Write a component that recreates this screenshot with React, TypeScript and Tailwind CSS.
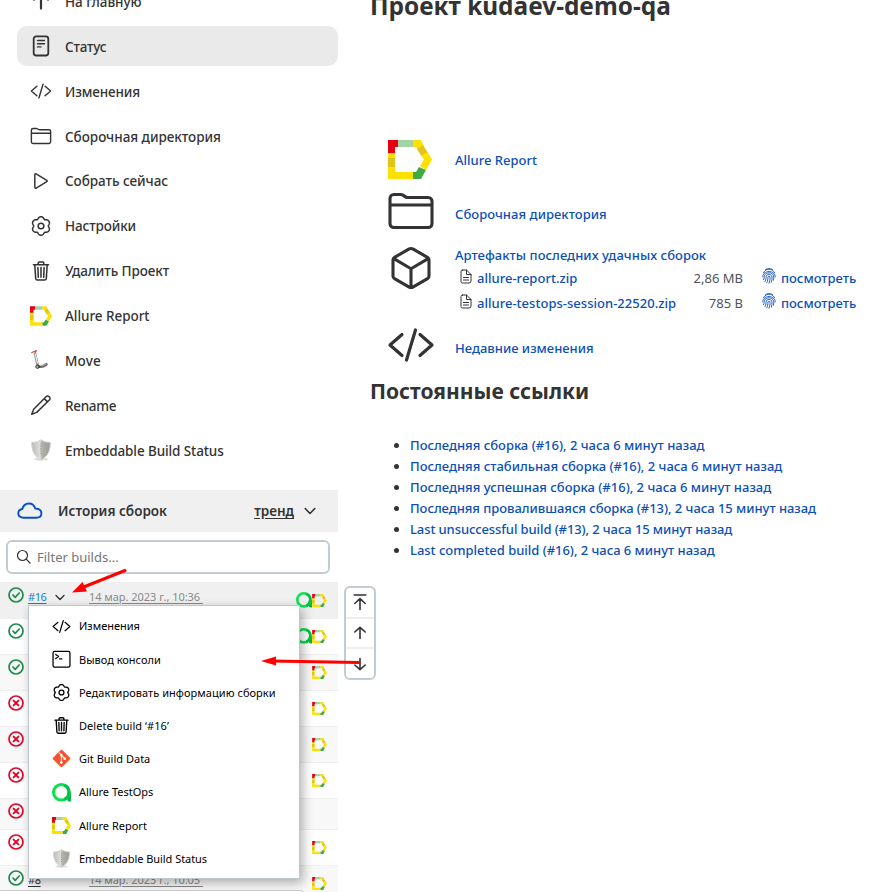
import type { ReactNode } from "react";

type P = { className?: string };
const line = { fill: "none", stroke: "currentColor", strokeLinecap: "round", strokeLinejoin: "round" } as const;

const Doc = ({ className }: P) => (
  <svg viewBox="0 0 22 22" className={className} {...line} strokeWidth="1.800"><rect x="3.700" y="1.300" width="14.600" height="19.200" rx="2.500" /><path d="M7.500 5.500h7M7.500 8.700h7M7.500 11.900h3.500" strokeWidth="1.400" /></svg>
);
const Code = ({ className }: P) => (
  <svg viewBox="0 0 512 512" className={className} {...line} strokeWidth="34"><path d="M160 368L32 256l128-112M352 368l128-112-128-112M304 96l-96 320" /></svg>
);
const Folder = ({ className }: P) => (
  <svg viewBox="0 0 512 512" className={className} {...line} strokeWidth="33"><path d="M440 432H72a40 40 0 01-40-40V120a40 40 0 0140-40h75.900a40 40 0 0122.200 6.700l27.800 18.600a40 40 0 0022.200 6.700H440a40 40 0 0140 40v240a40 40 0 01-40 40zM32 192h448" /></svg>
);
const Play = ({ className }: P) => (
  <svg viewBox="0 0 512 512" className={className} {...line} strokeWidth="34"><path d="M112 111v290c0 17.440 17 28.520 31 20.160l247.900-148.370c12.120-7.250 12.120-26.330 0-33.580L143 90.840c-14-8.360-31 2.720-31 20.160z" /></svg>
);
const gearOutline =
  "M" +
  Array.from({ length: 120 }, (_, i) => {
    const a = (i * Math.PI) / 60;
    const r = 196 + 22 * Math.cos(6 * a) - 4 * Math.cos(12 * a);
    return `${(256 + r * Math.sin(a)).toFixed(1)} ${(256 - r * Math.cos(a)).toFixed(1)}`;
  }).join("L") +
  "Z";
const Gear = ({ className }: P) => (
  <svg viewBox="0 0 512 512" className={className} {...line} strokeWidth="35"><circle cx="256" cy="256" r="66" /><path d={gearOutline} /></svg>
);
const Trash = ({ className }: P) => (
  <svg viewBox="0 0 512 512" className={className} {...line} strokeWidth="36"><path d="M112 112l20 320c.950 18.490 14.400 32 32 32h184c17.670 0 30.870-13.510 32-32l20-320M80 112h352M192 112V72a23.930 23.930 0 0124-24h80a23.930 23.930 0 0124 24v40M256 176v224M184 176l8 224M328 176l-8 224" /></svg>
);
const Pencil = ({ className }: P) => (
  <svg viewBox="0 0 22 22" className={className} {...line} strokeWidth="1.500"><path d="M16.300 2.500c1.700-1.700 5 1.500 3.300 3.200L6.700 18.400 1.700 20.300l2-5zM14.200 4.600l3.300 3.300" /></svg>
);
const Terminal = ({ className }: P) => (
  <svg viewBox="0 0 512 512" className={className} {...line} strokeWidth="34"><rect x="28" y="40" width="456" height="420" rx="44" /><path d="M100 120l78 56-78 56M204 240h60" /></svg>
);
const Cube = ({ className }: P) => (
  <svg viewBox="0 0 512 512" className={className} {...line} strokeWidth="33"><path d="M448 341.370V170.610A32 32 0 00432.110 143l-152-88.460a47.940 47.940 0 00-48.240 0L79.890 143A32 32 0 0064 170.610v170.760A32 32 0 0079.890 369l152 88.460a48 48 0 0048.240 0l152-88.460A32 32 0 00448 341.370zM69 153.990l187 110 187-110M256 463.990v-200" /></svg>
);
const Cloud = ({ className }: P) => (
  <svg viewBox="0 0 26 18" className={className} {...line} strokeWidth="1.900"><path d="M6.500 15.800C3.500 15.800 1.300 14 1.300 11.400S3.200 7.300 5.300 7C6.200 3.500 8.700 1.500 12 1.500c3.200 0 5.400 2.100 6.200 5 3.600.200 6.200 1.800 6.200 4.800 0 2.900-2.100 4.500-5 4.500z" /></svg>
);
const Chevron = ({ className }: P) => (
  <svg viewBox="0 0 12 8" className={className} {...line} strokeWidth="1.600"><path d="M1.200 1.500L6 6.500l4.800-5" /></svg>
);
const Search = ({ className }: P) => (
  <svg viewBox="0 0 16 16" className={className} {...line} strokeWidth="1.200"><circle cx="6.500" cy="6.500" r="5" /><path d="M10.200 10.200L14 14" /></svg>
);
const ArrowUp = ({ className }: P) => (
  <svg viewBox="0 0 16 16" className={className} {...line} strokeWidth="1.600"><path d="M2.800 7L8 2.300 13.200 7M8 2.300v11.200" /></svg>
);
const ArrowTop = ({ className }: P) => (
  <svg viewBox="0 0 16 18" className={className} {...line} strokeWidth="1.600"><path d="M2.200 2h11.600M2.800 10.500L8 5.500l5.200 5M8 5.500v11" /></svg>
);
const Allure = ({ className }: P) => (
  <svg viewBox="0 0 44 39" className={className}>
    <path d="M0 12h7v20h18v7H0z" fill="#ffe000" />
    <path d="M0 18h7v9H0z" fill="#e2c416" />
    <path d="M0 0h10v7H7v6H0z" fill="#e60012" />
    <path d="M10 0h15v7H10z" fill="#a5d3a2" />
    <path d="M25 0h8l3 6-6 4-2-3h-3z" fill="#ffe000" />
    <path d="M35 5l5 8-6 4-5-8z" fill="#e2c416" />
    <path d="M39.500 12L44 19.500 38 30l-6-4 4-6.500-2.500-4z" fill="#ffe000" />
    <path d="M31 27l7 3-5 9h-8v-7h3z" fill="#3eab47" />
  </svg>
);
const TestOps = ({ className }: P) => (
  <svg viewBox="0 0 20 20" className={className}>
    <path d="M16 10h4v9.500h-1.500C17 19.500 16 18.500 16 17z" fill="#00b845" />
    <circle cx="9.800" cy="9.800" r="8.200" fill="none" stroke="#0de04f" strokeWidth="3.200" />
    <path d="M13 2.300a8.200 8.200 0 010 15" fill="none" stroke="#00c247" strokeWidth="3.200" />
  </svg>
);
const Shield = ({ className }: P) => (
  <svg viewBox="0 0 20 20" className={className}>
    <defs><linearGradient id="sh" x1="0" x2="1"><stop offset="0" stopColor="#bcbcb8" /><stop offset=".45" stopColor="#deded9" /><stop offset=".55" stopColor="#b4b4ae" /><stop offset="1" stopColor="#9a9a94" /></linearGradient></defs>
    <ellipse cx="10" cy="18.300" rx="6.500" ry="1.400" fill="#ddd" />
    <path d="M10 .6C7.500 2.400 4 3.200 1.500 3c.2 7 1.500 12.500 8.500 16 7-3.500 8.300-9 8.500-16-2.500.2-6-.6-8.500-2.400z" fill="url(#sh)" stroke="#d2d2ce" strokeWidth=".8" />
    <path d="M10 4v11" stroke="#8b8b86" strokeWidth=".8" strokeDasharray="1 1.200" />
  </svg>
);
const Scooter = ({ className }: P) => (
  <svg viewBox="0 0 22 22" className={className} fill="none" strokeLinecap="round">
    <path d="M1.800 3.600L6.500 1.700M4.800 4.800L6 1.500" stroke="#d9383a" strokeWidth="1.100" />
    <path d="M5.200 5L7.600 16" stroke="#8a8a8a" strokeWidth="2.600" />
    <path d="M5.300 5L7.400 14" stroke="#eee" strokeWidth="1.200" />
    <path d="M9 17.500c3 .3 5.500-.7 7.200-2.200" stroke="#666" strokeWidth="3" />
    <path d="M10 16.500c2 .2 4-.3 6-1.500" stroke="#c8c8c8" strokeWidth="1" />
    <circle cx="7.500" cy="17.700" r="1.700" fill="#aaa" stroke="#333" />
  </svg>
);
const Git = ({ className }: P) => (
  <svg viewBox="0 0 20 20" className={className}>
    <rect x="3.200" y="3.200" width="13.600" height="13.600" rx="1" fill="#f4512c" transform="rotate(45 10 10)" />
    <path d="M7.300 3.700l2.500 2.600v8M9.800 6.500l3.600 3.600" fill="none" stroke="#fff" strokeWidth="1.100" />
    <circle cx="9.800" cy="6.400" r="1.400" fill="#fff" /><circle cx="9.800" cy="14.300" r="1.400" fill="#fff" /><circle cx="13.400" cy="10.200" r="1.400" fill="#fff" />
  </svg>
);
const File = ({ className }: P) => (
  <svg viewBox="0 0 12 15" className={className} {...line} strokeWidth="1"><path d="M2.500 1h4l4.500 4.500V12a2 2 0 01-2 2H2.500A1.500 1.500 0 011 12.500v-10A1.500 1.500 0 012.500 1zM6.500 1v4.500H11M3.500 8.500h5M3.500 11h5" /></svg>
);
const Finger = ({ className }: P) => (
  <svg viewBox="0 0 14 16" className={className} {...line} strokeWidth=".9">
    <path d="M3.500 1.700C5.300.3 8.800.3 10.600 1.700M1.500 4.700C4-.2 10-.2 12.600 4.700M.8 9C.2 1.600 13.800 1.600 13.200 9M1.500 11.700c1-1.600.6-3 1-4.300 1.200-3.400 7.800-3.400 9 0 .4 1.600.4 3.200 0 4.800M3 13.500c1.300-2 .9-3.600 1.200-5.300.6-2.200 5-2.200 5.600 0 .3 2 .2 4-.5 6M4.800 14.800c1.200-2 1-3.800 1.200-5.800.3-1 1.800-1 2 0 .2 2-.2 4.200-1 6.200" />
  </svg>
);
const Ok = ({ className }: P) => (
  <svg viewBox="0 0 16 16" className={className} {...line} stroke="#1f8b4c" strokeWidth="1.700"><circle cx="8" cy="8" r="7" /><path d="M5 8.200l2.200 2.100L11.200 6" /></svg>
);
const Fail = ({ className }: P) => (
  <svg viewBox="0 0 16 16" className={className} {...line} stroke="#e1062c" strokeWidth="1.700"><circle cx="8" cy="8" r="7" /><path d="M5.600 5.600l4.800 4.800M10.400 5.600l-4.800 4.800" strokeWidth="2" /></svg>
);

const nav: [string, (p: P) => ReactNode, string][] = [
  ["На главную", ArrowUp, "mt-0.5 tracking-[-0.05px]"],
  ["Статус", Doc, "mt-0.5 tracking-[-0.18px]"],
  ["Изменения", Code, "mt-0.5 tracking-[-0.13px]"],
  ["Сборочная директория", Folder, "mt-0.5 tracking-[-0.03px]"],
  ["Собрать сейчас", Play, "mt-px tracking-[-0.05px]"],
  ["Настройки", Gear, "mt-px tracking-[-0.13px]"],
  ["Удалить Проект", Trash, "mt-px tracking-[-0.09px]"],
  ["Allure Report", Allure, "mt-0.5 tracking-[-0.05px]"],
  ["Move", Scooter, "mt-0.5 tracking-[0.17px]"],
  ["Rename", Pencil, "mt-0.5 tracking-[-0.3px]"],
  ["Embeddable Build Status", Shield, "mt-0.5 tracking-[-0.11px]"],
];
const menu: [string, (p: P) => ReactNode, string][] = [
  ["Изменения", Code, ""],
  ["Вывод консоли", Terminal, ""],
  ["Редактировать информацию сборки", Gear, "tracking-[0.05px]"],
  ["Delete build ‘#16’", Trash, "tracking-[0.07px]"],
  ["Git Build Data", Git, ""],
  ["Allure TestOps", TestOps, ""],
  ["Allure Report", Allure, ""],
  ["Embeddable Build Status", Shield, "tracking-[-0.05px]"],
];
const links: [string, string][] = [
  ["Последняя сборка (#16), 2 часа 6 минут назад", ""],
  ["Последняя стабильная сборка (#16), 2 часа 6 минут назад", ""],
  ["Последняя успешная сборка (#16), 2 часа 6 минут назад", ""],
  ["Последняя провалившаяся сборка (#13), 2 часа 15 минут назад", "tracking-[-0.04px]"],
  ["Last unsuccessful build (#13), 2 часа 15 минут назад", "tracking-[-0.1px]"],
  ["Last completed build (#16), 2 часа 6 минут назад", "tracking-[-0.03px]"],
];
const artifacts = [
  { name: "allure-report.zip", size: "2,86 MB" },
  { name: "allure-testops-session-22520.zip", size: "785 B" },
];
const rows = [
  { h: "h-[36px] bg-[#f0f0f0]", ok: true, ops: true, rep: true, id: "#16", date: "14 мар. 2023 г., 10:36 " },
  { h: "h-[36px]", ok: true, ops: true, rep: true },
  { h: "h-[36px] bg-[#f8f8f8]", ok: true, rep: true },
  { h: "h-[36px]", rep: true },
  { h: "h-[36px] bg-[#f8f8f8]", rep: true },
  { h: "h-[36px]", rep: true },
  { h: "h-[31px] bg-[#f8f8f8]" },
  { h: "h-[36px]", rep: true },
  { h: "h-[36px] bg-[#f8f8f8]", ok: true, rep: true, id: "#8", date: "14 мар. 2023 г., 10:05 " },
];

export default function App() {
  return (
    <div className="relative flex h-[892px] w-[881px] overflow-hidden bg-white font-['Noto_Sans','Liberation_Sans',sans-serif] text-[13.500px] whitespace-nowrap text-[#333]">
      <aside className="flex w-[338px] shrink-0 flex-col">
        <nav className="-mt-[18.700px] ml-[17px] flex flex-col gap-[4.900px]">
          {nav.map(([t, I, track], i) => (
            <a key={t} className={"flex h-10 shrink-0 items-center gap-[13px] rounded-[10px] pl-[13px] " + (i === 1 ? "bg-[#eaeaea]" : "")}>
              <I className="size-[22px]" />
              <span className={"font-medium " + track}>{t}</span>
            </a>
          ))}
        </nav>
        <header className="mt-[19.700px] flex h-[42px] shrink-0 items-center bg-[#f0f0f0] pr-[22px] pl-[17px] font-semibold">
          <Cloud className="h-[18px] w-[26px] text-[#0b4fc4]" />
          <span className="ml-[15px]">История сборок</span>
          <span className="ml-auto underline underline-offset-2">тренд</span>
          <Chevron className="ml-[10px] h-2 w-3" />
        </header>
        <div className="mt-2 ml-[6px] flex h-[34px] w-[324px] shrink-0 items-center gap-[5px] rounded-md border-2 border-[#c3ccd1] pl-2 text-[13px] text-[#757575]">
          <Search className="size-4 text-[#333]" />
          <span className="mt-0.5">Filter builds...</span>
        </div>
        <div className="mt-2 flex flex-col">
          {rows.map((r, i) => (
            <div key={i} className={"flex shrink-0 items-start border-t border-[#eeeeee] pr-[11px] pl-2 " + r.h}>
              {r.ok ? <Ok className="mt-1 size-4" /> : <Fail className="mt-1 size-4" />}
              {r.id && (
                <div className="mt-[6px] ml-1 flex h-4 items-center text-[11px]">
                  <span className={"mr-[9px] w-[19px] tracking-[-0.4px] underline underline-offset-2 " + (i === 0 ? "text-[#0b84d6]" : "")}>{r.id}</span>
                  <span className="mt-0.5 mr-[23px] w-[10px]">{i === 0 && <Chevron className="-ml-px h-[7px] w-[10px]" />}</span>
                  <span className="tracking-[-0.03px] whitespace-pre text-[#8a8a8a] underline underline-offset-2">{r.date}</span>
                </div>
              )}
              <span className="mt-[9px] ml-auto flex h-[17px] items-center">
                {r.ops && <TestOps className="size-4" />}
                {r.rep && <Allure className="h-[13px] w-[15px]" />}
              </span>
            </div>
          ))}
        </div>
      </aside>
      <main className="flex flex-1 flex-col items-start pl-8">
        <h1 className="-mt-3 h-[36px] text-[24.400px] leading-[36px] font-bold">Проект kudaev-demo-qa</h1>
        <div className="mt-[115px] ml-[17px] flex flex-col text-[13px] font-medium text-[#0b4fb8]">
          <div className="flex h-[40px] items-center gap-[23px]"><Allure className="ml-px h-[39px] w-[44px]" /><span className="mt-[3px]">Allure Report</span></div>
          <div className="mt-[5px] flex h-[54px] items-center gap-5"><Folder className="size-12 text-[#333]" /><span className="mt-[7px] tracking-[0.05px]">Сборочная директория</span></div>
          <div className="mt-[5px] flex items-start gap-5">
            <Cube className="mt-px size-12 text-[#333]" />
            <div className="flex flex-col">
              <span className="mt-px h-[22px] leading-[23px] tracking-[0.05px]">Артефакты последних удачных сборок</span>
              {artifacts.map((a) => (
                <div key={a.name} className="flex h-[25px] items-center pl-[5px]">
                  <File className="mr-[5px] mb-1 h-[15px] w-3 text-[#333]" />
                  <span className="w-[200px] tracking-[0.02px]">{a.name}</span>
                  <span className="w-[66px] text-right font-normal text-[#4d545d]">{a.size}</span>
                  <Finger className="mr-[5px] mb-1.5 ml-[19px] h-4 w-[14px]" />
                  <span>посмотреть</span>
                </div>
              ))}
            </div>
          </div>
          <div className="mt-[7px] flex h-12 items-center gap-5"><Code className="-mt-1 size-12 text-[#333]" /><span className="mt-[3px]">Недавние изменения</span></div>
        </div>
        <h2 className="mt-[5px] text-[21px] leading-[30px] font-bold">Постоянные ссылки</h2>
        <ul className="mt-[29px] flex list-disc flex-col pl-10 text-[13px] leading-[21px] font-medium">
          {links.map(([t, track]) => <li key={t}><span className={"text-[#0b4fb8] " + track}>{t}</span></li>)}
        </ul>
      </main>

      <div className="absolute top-[586px] left-[344px] flex h-[94px] w-8 flex-col rounded-md border-2 border-[#c3ccd1] bg-white">
        <span className="flex flex-1 items-center justify-center border-b-2 border-[#eee]"><ArrowTop className="h-[18px] w-4" /></span>
        <span className="flex flex-1 items-center justify-center border-b-2 border-[#eee]"><ArrowUp className="size-4" /></span>
        <span className="flex flex-1 items-center justify-center"><ArrowUp className="size-4 rotate-180" /></span>
      </div>
      <div className="absolute -bottom-3 -left-2 h-[14px] w-[314px] rounded-md border border-[#ccc] bg-white" />
      <div className="absolute top-[605px] left-[28px] flex h-[274px] w-[272px] flex-col border border-[#bcc8ce] bg-white pt-[3.600px] pl-[23px] text-[11px] text-black shadow-[3px_4px_10px_rgba(0,0,0,0.3)]">
        {menu.map(([t, I, track]) => (
          <a key={t} className="flex h-[33.200px] items-center gap-2"><I className="size-[19px]" /><span className={"mt-px " + track}>{t}</span></a>
        ))}
      </div>
      <svg viewBox="0 0 881 892" className="pointer-events-none absolute inset-0 size-full" fill="#f00" stroke="#f00">
        <path d="M125 570.500L85 586.500M359 662.500L272 661" strokeWidth="3" strokeLinecap="round" />
        <path d="M72 592.500l10.500-10.500 4.500 9.500zM261 661l15-4.500v9z" stroke="none" />
      </svg>
    </div>
  );
}
